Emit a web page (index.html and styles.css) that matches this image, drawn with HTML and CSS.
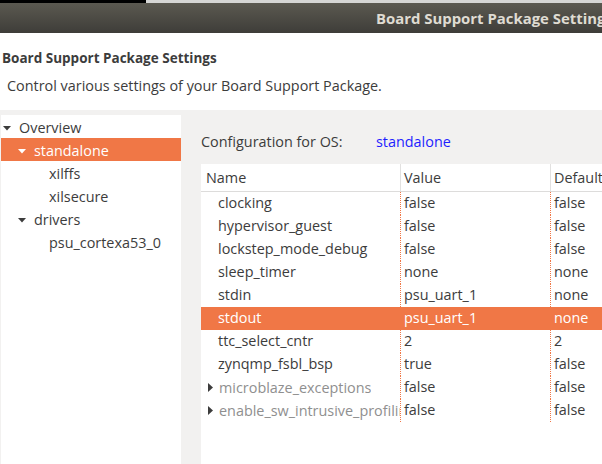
FILE: index.html
```html
<!DOCTYPE html>
<html>
<head>
<meta charset="utf-8">
<link rel="stylesheet" href="styles.css">
</head>
<body>
<div class="topstrip"><div class="topstrip-dark"></div><div class="topstrip-light"></div></div>
<div class="titlebar">Board Support Package Settings</div>
<div class="header">
  <h1 class="heading">Board Support Package Settings</h1>
  <p class="desc">Control various settings of your Board Support Package.</p>
</div>
<div class="main">
  <div class="tree">
    <div class="node lvl0"><svg class="tw" width="8" height="5" viewBox="0 0 8 5"><polygon points="0,0 8,0 4,4.5"/></svg><span>Overview</span></div>
    <div class="node lvl1 sel"><svg class="tw" width="8" height="5" viewBox="0 0 8 5"><polygon points="0,0 8,0 4,4.5"/></svg><span>standalone</span></div>
    <div class="node lvl2"><span class="tw-space"></span><span>xilffs</span></div>
    <div class="node lvl2"><span class="tw-space"></span><span>xilsecure</span></div>
    <div class="node lvl1"><svg class="tw" width="8" height="5" viewBox="0 0 8 5"><polygon points="0,0 8,0 4,4.5"/></svg><span>drivers</span></div>
    <div class="node lvl2"><span class="tw-space"></span><span>psu_cortexa53_0</span></div>
  </div>
  <div class="content">
    <div class="config"><span class="config-label">Configuration for OS:</span><span class="config-val">standalone</span></div>
    <div class="table">
      <div class="thead">
        <div class="th th-name">Name</div>
        <div class="th">Value</div>
        <div class="th">Default</div>
      </div>
      <div class="trow"><div class="td td-name">clocking</div><div class="td">false</div><div class="td">false</div></div>
      <div class="trow"><div class="td td-name">hypervisor_guest</div><div class="td">false</div><div class="td">false</div></div>
      <div class="trow"><div class="td td-name">lockstep_mode_debug</div><div class="td">false</div><div class="td">false</div></div>
      <div class="trow"><div class="td td-name">sleep_timer</div><div class="td">none</div><div class="td">none</div></div>
      <div class="trow"><div class="td td-name">stdin</div><div class="td">psu_uart_1</div><div class="td">none</div></div>
      <div class="trow sel"><div class="td td-name">stdout</div><div class="td">psu_uart_1</div><div class="td">none</div></div>
      <div class="trow"><div class="td td-name">ttc_select_cntr</div><div class="td">2</div><div class="td">2</div></div>
      <div class="trow"><div class="td td-name">zynqmp_fsbl_bsp</div><div class="td">true</div><div class="td">false</div></div>
      <div class="trow"><div class="td td-name td-group"><svg class="exp" width="5" height="9" viewBox="0 0 5 9"><polygon points="0,0 5,4.5 0,9"/></svg><span class="dim">microblaze_exceptions</span></div><div class="td">false</div><div class="td">false</div></div>
      <div class="trow"><div class="td td-name td-group"><svg class="exp" width="5" height="9" viewBox="0 0 5 9"><polygon points="0,0 5,4.5 0,9"/></svg><span class="dim">enable_sw_intrusive_profiling</span></div><div class="td">false</div><div class="td">false</div></div>
    </div>
  </div>
</div>
</body>
</html>
```

FILE: styles.css
```css
html, body {
  margin: 0;
  padding: 0;
}
body {
  width: 602px;
  height: 464px;
  overflow: hidden;
  font-family: "Open Sans", "Noto Sans", sans-serif;
  font-size: 14.4px;
  color: #3c3c3c;
  background: #ffffff;
}
.topstrip {
  display: flex;
  height: 3px;
}
.topstrip-dark {
  width: 146px;
  background: #000000;
}
.topstrip-light {
  flex: 1;
  background: #d6d6d4;
}
.titlebar {
  height: 30px;
  line-height: 30px;
  background: linear-gradient(#5b5950, #3e3d39);
  color: #dfdbd2;
  font-weight: 700;
  font-size: 14.9px;
  padding-left: 376px;
  white-space: nowrap;
  overflow: hidden;
}
.header {
  height: 77px;
  box-sizing: border-box;
  padding-top: 15px;
}
.heading {
  margin: 0;
  padding-left: 2px;
  font-size: 13.5px;
  font-weight: 700;
  line-height: 20px;
  color: #3c3c3c;
}
.desc {
  margin: 8px 0 0 0;
  padding-left: 7px;
  line-height: 20px;
}
.main {
  display: flex;
  height: 354px;
  box-sizing: border-box;
  padding-top: 5px;
  background: #f2f1f0;
}
.tree {
  margin-left: 1px;
  width: 180px;
  background: #ffffff;
  flex: none;
}
.node {
  display: flex;
  align-items: center;
  height: 23px;
  box-sizing: border-box;
  padding-top: 3px;
  line-height: 20px;
  white-space: nowrap;
}
.node.lvl0 { padding-left: 2px; }
.node.lvl1 { padding-left: 17px; }
.node.lvl2 { padding-left: 32px; }
.tw {
  width: 8px;
  height: 5px;
  margin-right: 8px;
  fill: #3c3c3c;
  flex: none;
}
.tw-space {
  width: 16px;
  flex: none;
}
.node.sel {
  background: #f07746;
  color: #ffffff;
}
.node.sel .tw {
  fill: #ffffff;
}
.content {
  flex: 1;
  min-width: 0;
  margin-left: 20px;
  display: flex;
  flex-direction: column;
  overflow: hidden;
}
.config {
  margin-top: 15px;
  height: 23px;
  line-height: 23px;
  white-space: nowrap;
  display: flex;
}
.config-label {
  width: 175px;
  flex: none;
}
.config-val {
  color: #1e1eff;
}
.table {
  margin-top: 11px;
  flex: 1;
  background: #ffffff;
  overflow: hidden;
}
.thead,
.trow {
  display: grid;
  grid-template-columns: 199px 150px 150px;
  width: 499px;
  white-space: nowrap;
}
.thead {
  height: 28px;
  box-sizing: border-box;
  border-bottom: 1px solid #dddcdb;
  line-height: 27px;
}
.th {
  padding-left: 3px;
  border-left: 1px solid #e2e1e0;
}
.th.th-name {
  padding-left: 5px;
  border-left: none;
}
.trow {
  height: 23px;
  line-height: 22px;
}
.td {
  padding-left: 3px;
  border-left: 1px dotted #f07746;
  overflow: hidden;
}
.td.td-name {
  padding-left: 17px;
  border-left: none;
}
.td.td-group {
  display: flex;
  align-items: center;
  padding-left: 7px;
}
.exp {
  width: 5px;
  height: 9px;
  margin-right: 6px;
  fill: #3c3c3c;
  flex: none;
}
.dim {
  color: #8f8f8f;
  min-width: 0;
  overflow: hidden;
  text-overflow: clip;
}
.trow.sel {
  background: #f07746;
  color: #ffffff;
}
```
